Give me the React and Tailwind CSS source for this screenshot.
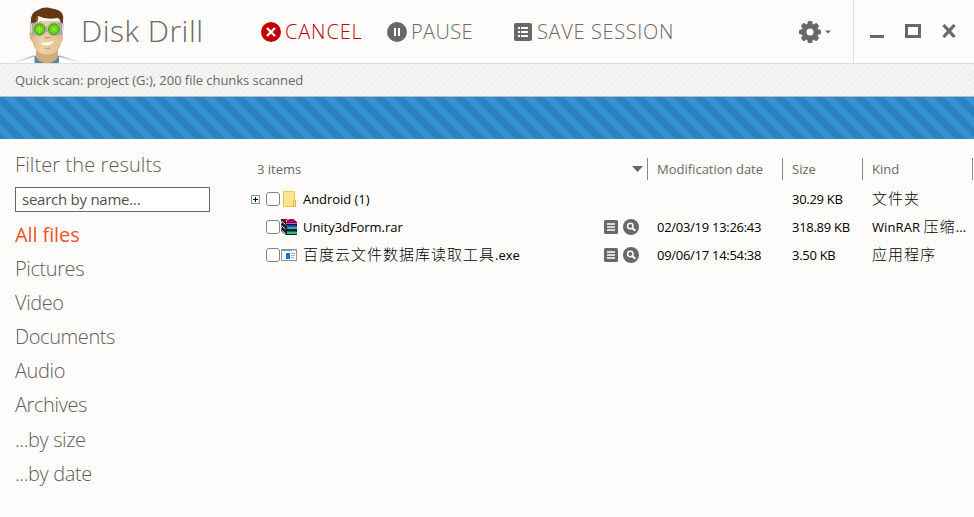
import React from "react";

const LATIN = "font-['Open_Sans','Noto_Sans_CJK_SC',sans-serif]";

function Doctor() {
  return (
    <svg width="76" height="57" viewBox="0 0 76 57" className="block">
      <defs>
        <linearGradient id="face" x1="0" x2="1">
          <stop offset="0" stopColor="#d9b285" />
          <stop offset=".35" stopColor="#efcfa6" />
          <stop offset="1" stopColor="#e3bf93" />
        </linearGradient>
        <linearGradient id="coatEdge" x1="0" x2="1">
          <stop offset="0" stopColor="#c8c8c6" stopOpacity=".2" />
          <stop offset=".3" stopColor="#b4b4b2" />
          <stop offset=".7" stopColor="#b4b4b2" />
          <stop offset="1" stopColor="#c8c8c6" stopOpacity=".2" />
        </linearGradient>
      </defs>
      <path d="M2 57Q12 53 23 49.500L47 49.500Q58 53 69 57Z" fill="#fff" />
      <path d="M2 57Q12 53 22 50M69 57Q58 53 47 50" stroke="url(#coatEdge)" strokeWidth="1.500" fill="none" />
      <path d="M22.500 57V50L25 49H45L47 50V57Z" fill="#5b86ad" />
      <path d="M24 40H46V51Q42 57 35 57Q28 57 24 51Z" fill="#cfac7e" />
      <path d="M19 15H51V31Q51 35 49.500 36Q48 44 42 47Q35 50 28 47Q22 44 20.500 36Q17.500 34 17.500 28Z" fill="url(#face)" />
      <path d="M19 22V12Q20 6 26 4Q32 0 40 2.500Q46 3 49 6Q52 9 51 15V22L49.500 20Q49 14 46 12Q34 14 26 10Q27 14 24 16L20 21Z" fill="#633813" />
      <path d="M26 10Q24 12 25 15" stroke="#a46c3c" fill="none" />
      <path d="M18 17L24 16.500V30L18.500 28ZM51.500 17L46 16.500V30L51 28Z" fill="#a3a3a3" />
      <path d="M18.500 18L20 17.700V27L18.500 26.500ZM51 18L50 17.700V27L51 26.500Z" fill="#d5d5d5" />
      <rect x="31" y="21" width="8" height="5" fill="#9b9b9b" />
      <circle cx="27.500" cy="23.300" r="7.200" fill="#b9b8b5" />
      <circle cx="42" cy="23.300" r="7.200" fill="#b9b8b5" />
      <circle cx="27.500" cy="23.300" r="5.400" fill="#62cf0c" stroke="#409b00" />
      <circle cx="42" cy="23.300" r="5.400" fill="#62cf0c" stroke="#409b00" />
      <path d="M27.500 20V27M24 23.300H31M25 21L30 26M30 21L25 26M42 20V27M38.500 23.300H45.500M39.500 21L44.500 26M44.500 21L39.500 26" stroke="#9cf233" strokeWidth=".8" />
      <path d="M33 31Q35 33 38 31" stroke="#c38f62" strokeWidth="1.300" fill="none" />
      <path d="M28.500 36.500Q35 37.500 41.500 35Q40.500 38.500 36 39.300Q31 39.800 28.500 36.500Z" fill="#fff" />
      <path d="M32.500 42Q35 43.500 38 42" stroke="#c99f70" fill="none" />
    </svg>
  );
}

function CancelIcon() {
  return (
    <svg width="20" height="20" viewBox="0 0 20 20">
      <circle cx="10" cy="10" r="10" fill="#c00000" />
      <path d="M6 6L14 14M14 6L6 14" stroke="#fff" strokeWidth="2.400" />
    </svg>
  );
}

function PauseIcon() {
  return (
    <svg width="20" height="20" viewBox="0 0 20 20">
      <circle cx="10" cy="10" r="10" fill="#686866" />
      <path d="M7 6H9V14H7ZM11 6H13V14H11Z" fill="#fff" />
    </svg>
  );
}

function SessionIcon() {
  return (
    <svg width="18" height="18" viewBox="0 0 18 18">
      <rect width="18" height="18" rx="2" fill="#686866" />
      <path d="M4 4H6V6H4ZM7 4H14V6H7ZM4 8H6V10H4ZM7 8H14V10H7ZM4 12H6V14H4ZM7 12H14V14H7Z" fill="#fff" />
    </svg>
  );
}

function Gear() {
  return (
    <svg width="22" height="22" viewBox="0 0 22 22">
      <g fill="#686866">
        <rect x="8.500" y="0" width="5" height="22" rx="1.500" />
        <rect x="0" y="8.500" width="22" height="5" rx="1.500" />
        <rect x="8.500" y="0" width="5" height="22" rx="1.500" transform="rotate(45 11 11)" />
        <rect x="8.500" y="0" width="5" height="22" rx="1.500" transform="rotate(-45 11 11)" />
        <circle cx="11" cy="11" r="8.600" />
      </g>
      <circle cx="11" cy="11" r="3.500" fill="#fdfcfa" />
    </svg>
  );
}

function ListIcon() {
  return (
    <svg width="14" height="14" viewBox="0 0 14 14">
      <rect width="14" height="14" rx="1.500" fill="#686866" />
      <path d="M3 4H11M3 7H11M3 10H11" stroke="#fff" strokeWidth="1.300" />
    </svg>
  );
}

function PreviewIcon() {
  return (
    <svg width="16" height="16" viewBox="0 0 16 16">
      <circle cx="8" cy="8" r="8" fill="#686866" />
      <circle cx="7.300" cy="7" r="2.700" stroke="#fff" strokeWidth="1.500" fill="none" />
      <path d="M9 9L12.300 11.700" stroke="#fff" strokeWidth="2" />
    </svg>
  );
}

function FolderIcon() {
  return (
    <svg width="16" height="16" viewBox="0 0 16 16">
      <path d="M2.500 .5H13.500V9.500H14.500V15.500H2.500Z" fill="#ffe391" stroke="#e8c65c" />
      <path d="M12.500 15.500V10Q12.500 9.500 13 9.500H14.500V15.500Z" fill="#ffe99f" stroke="#e0b83c" />
    </svg>
  );
}

function RarIcon() {
  return (
    <svg width="16" height="16" viewBox="0 0 16 16">
      <path d="M0 0H12L16 3V16H5L0 12V10L1 9L0 7V5L1 4L0 2Z" fill="#1a1a1a" />
      <path d="M1 0H12L15 3H5Z" fill="#a40061" />
      <path d="M5 4H16V5H5Z" fill="#e64aa1" />
      <path d="M5 3H16V4H5Z" fill="#8a0052" />
      <path d="M4 6H15V7H5Z" fill="#124a94" />
      <path d="M6 8H16V10H6Z" fill="#3f98e8" />
      <path d="M6 7H16V8H6Z" fill="#1a5cb0" />
      <path d="M6 13H16V15H6Z" fill="#2cc08c" />
      <path d="M5 12H15V13H6Z" fill="#087050" />
      <path d="M.5 2L4.500 5.500M.5 6.500L4.500 10M.5 11L4.500 14.500" stroke="#e8e8e8" strokeWidth="1" />
      <path d="M6 0H8V1H6ZM5 1H6V3H5Z" fill="#e6c630" />
    </svg>
  );
}

function ExeIcon() {
  return (
    <svg width="16" height="16" viewBox="0 0 16 16" shapeRendering="crispEdges">
      <rect x=".5" y="2.500" width="15" height="11" fill="#fff" stroke="#8f969c" />
      <rect x="0" y="2" width="16" height="2" fill="#8f969c" />
      <path d="M11 3H12M13 3H14" stroke="#fff" />
      <rect x="5" y="6" width="4" height="6" fill="#0a74d8" />
      <path d="M10 6.500H14M10 8.500H14M10 10.500H13" stroke="#aaa" />
    </svg>
  );
}

const filters = ["Pictures", "Video", "Documents", "Audio", "Archives", "...by size", "...by date"];

const files = [
  { name: "Android (1)", icon: <FolderIcon />, tree: true, date: "", size: "30.29 KB", kind: <Han>文件夹</Han> },
  { name: "Unity3dForm.rar", icon: <RarIcon />, date: "02/03/19 13:26:43", size: "318.89 KB", kind: <>WinRAR <Han>压缩</Han>...</> },
  { name: <><Han>百度云文件数据库读取工具</Han>.exe</>, icon: <ExeIcon />, date: "09/06/17 14:54:38", size: "3.50 KB", kind: <Han>应用程序</Han> },
];

function Han({ children }) {
  return <span className="font-['Noto_Sans_CJK_SC',sans-serif] text-[15px] font-light leading-none tracking-[1px]">{children}</span>;
}

function Row({ file }) {
  return (
    <div className="flex h-7 items-center text-[13px] leading-7 text-black">
      <div className="flex h-7 w-[397px] shrink-0 items-center">
        <div className="flex w-[15px] shrink-0">
          {file.tree && (
            <svg width="9" height="9" viewBox="0 0 9 9" shapeRendering="crispEdges">
              <rect x=".5" y=".5" width="8" height="8" fill="#fff" stroke="#7898b5" />
              <path d="M2 4.500H7M4.500 2V7" stroke="#000" />
            </svg>
          )}
        </div>
        <div className="h-[14px] w-[14px] shrink-0 rounded-[3px] border border-[#858585] bg-white" />
        <div className="ml-px w-[22px] shrink-0">{file.icon}</div>
        <div className="h-7 grow whitespace-nowrap tracking-[-0.05px]">{file.name}</div>
        {!file.tree && (
          <div className="mr-[9px] flex w-[35px] items-center justify-between">
            <ListIcon />
            <PreviewIcon />
          </div>
        )}
      </div>
      <div className="h-7 w-[135px] shrink-0 whitespace-nowrap pl-[9px] tracking-[-0.28px]">{file.date}</div>
      <div className="h-7 w-20 shrink-0 whitespace-nowrap pl-[9px] tracking-[-0.28px]">{file.size}</div>
      <div className="h-7 w-[111px] shrink-0 overflow-hidden whitespace-nowrap pl-[9px] tracking-[0.1px]">{file.kind}</div>
    </div>
  );
}

export default function App() {
  return (
    <div className={`flex h-[517px] w-[974px] flex-col overflow-hidden bg-[#fdfcfa] text-[#686866] ${LATIN}`}>
      <header className="flex h-16 shrink-0 border-b border-[#dededc]">
        <div className="flex w-[261px] shrink-0 pl-3">
          <div className="w-[69px] shrink-0 pt-[6px]">
            <Doctor />
          </div>
          <h1 className="whitespace-nowrap text-[30px] font-[350] leading-[62px] tracking-[0.5px]">Disk Drill</h1>
        </div>
        <nav className="flex grow items-center text-[20px] font-light leading-[62px]">
          <button className="flex w-[126px] items-center gap-1 text-[#c00000]">
            <CancelIcon />
            <span className="tracking-[0.85px]">CANCEL</span>
          </button>
          <button className="flex w-[127px] items-center gap-1">
            <PauseIcon />
            <span className="tracking-[0.4px]">PAUSE</span>
          </button>
          <button className="flex items-center gap-[5px]">
            <SessionIcon />
            <span className="whitespace-nowrap tracking-[0.65px]">SAVE SESSION</span>
          </button>
        </nav>
        <div className="flex w-[55px] shrink-0 items-center gap-1 border-r border-[#dededc]">
          <Gear />
          <svg width="6" height="4" viewBox="0 0 6 4"><path d="M0 .5H6L3 3.500Z" fill="#686866" /></svg>
        </div>
        <div className="flex w-[120px] shrink-0 items-center">
          <svg width="120" height="63" viewBox="0 0 120 63">
            <path d="M16 35H30V38H16Z" fill="#686866" />
            <rect x="52.500" y="25.500" width="13" height="11" fill="none" stroke="#686866" strokeWidth="3" />
            <path d="M89.500 25L100.500 37M100.500 25L89.500 37" stroke="#686866" strokeWidth="3.300" />
          </svg>
        </div>
      </header>
      <div className="h-[33px] shrink-0 border-b border-[#bcbcba] bg-[linear-gradient(-45deg,#f6f5f3_25%,#f0efed_25%,#f0efed_50%,#f6f5f3_50%,#f6f5f3_75%,#f0efed_75%)] bg-[length:6px_6px] pl-[15px] text-[13px] leading-[33px] tracking-[-0.04px]">
        Quick scan: project (G:), 200 file chunks scanned
      </div>
      <div className="h-[42px] shrink-0 bg-[linear-gradient(45deg,#3391d4_25%,#2d81bd_25%,#2d81bd_50%,#3391d4_50%,#3391d4_75%,#2d81bd_75%)] bg-[length:20px_20px] bg-[position:4px_0px]" />
      <main className="flex grow">
        <aside className="w-[251px] shrink-0 pl-[15px] text-[20px] font-light text-[#5e5e5c]">
          <h2 className="mt-[9px] leading-[34px] tracking-[0.1px]">Filter the results</h2>
          <input
            className="mb-[6px] mt-[5px] block h-[25px] w-[195px] border border-[#686866] bg-white px-[6px] pb-[2px] text-[15px] font-normal leading-[21px] tracking-[-0.25px] outline-none placeholder:text-[#50504e]"
            placeholder="search by name..."
          />
          <div className="h-[34.1px] font-normal leading-[34px] tracking-[-0.1px] text-[#f0522c]">All files</div>
          {filters.map((f) => (
            <div key={f} className="h-[34.1px] leading-[34.4px] tracking-[-0.4px]">{f}</div>
          ))}
        </aside>
        <section className="w-[723px] shrink-0 pt-[19px]">
          <div className="mb-[5px] flex h-[22px] text-[13px] leading-[22px]">
            <div className="flex w-[397px] items-center justify-between border-r border-[#8a8a88] pl-[6px] pr-1">
              <span>3 items</span>
              <svg width="11" height="6" viewBox="0 0 11 6"><path d="M0 0H11L5.500 6Z" fill="#686866" /></svg>
            </div>
            <div className="w-[135px] border-r border-[#8a8a88] pl-[9px]">Modification date</div>
            <div className="w-20 border-r border-[#8a8a88] pl-[9px]">Size</div>
            <div className="w-[110px] border-r border-[#8a8a88] pl-[9px]">Kind</div>
          </div>
          {files.map((file, i) => (
            <Row key={i} file={file} />
          ))}
        </section>
      </main>
    </div>
  );
}
